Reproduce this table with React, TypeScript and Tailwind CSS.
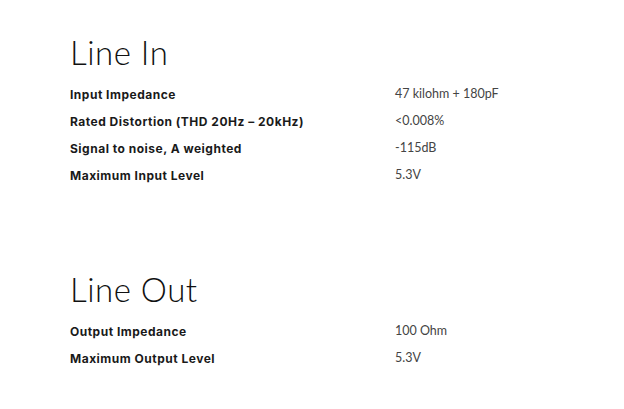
const specs = [
  {
    title: 'Line In',
    rows: [
      ['Input Impedance', '47 kilohm + 180pF'],
      ['Rated Distortion (THD 20Hz – 20kHz)', '<0.008%'],
      ['Signal to noise, A weighted', '-115dB'],
      ['Maximum Input Level', '5.3V'],
    ],
  },
  {
    title: 'Line Out',
    rows: [
      ['Output Impedance', '100 Ohm'],
      ['Maximum Output Level', '5.3V'],
    ],
  },
]

const App = () => {
  return (
    <div className="w-[624px] h-[409px] bg-white overflow-hidden font-['Lato',sans-serif] text-[#111]">
      <div className="pl-[70px] pt-[30px] flex flex-col gap-[78px]">
        {specs.map((section) => (
          <div key={section.title}>
            <h2 className="text-[33px] leading-[44px] font-light tracking-[0.5px] text-[#111]">
              {section.title}
            </h2>
            <div className="mt-[7px] flex flex-col">
              {section.rows.map(([label, value]) => (
                <div key={label} className="flex h-[27px] items-center">
                  <span className="w-[325px] font-['Inter',sans-serif] text-[12px] font-bold tracking-[0.5px] text-[#1a1a1a]">
                    {label}
                  </span>
                  <span className="text-[12.5px] text-[#444]">{value}</span>
                </div>
              ))}
            </div>
          </div>
        ))}
      </div>
    </div>
  )
}

export default App
